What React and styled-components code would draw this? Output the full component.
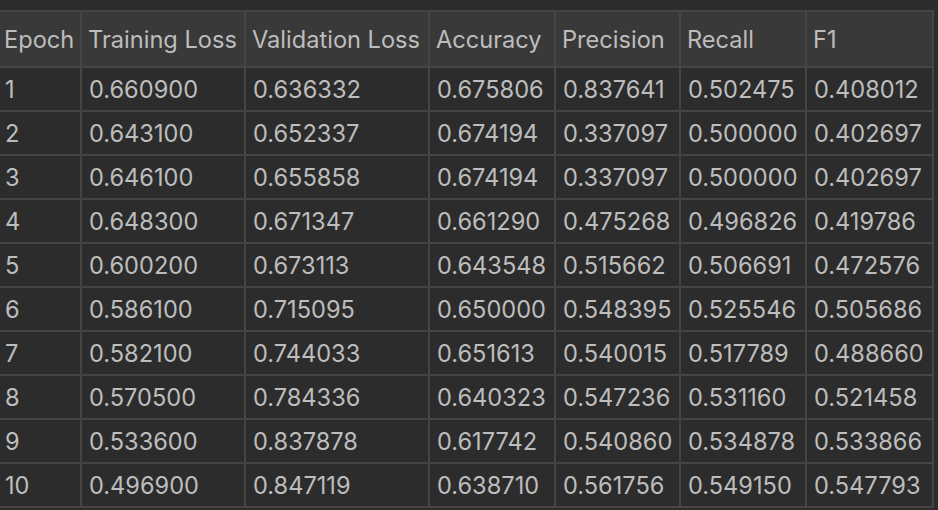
import React from "react";
import styled, { createGlobalStyle } from "styled-components";

const Global = createGlobalStyle`
  html, body { margin: 0; padding: 0; background: #2c2c2c; }
  body { font-family: Inter, "Noto Sans", sans-serif; }
`;

const Page = styled.div`
  padding-top: 10px;
  width: 938px;
  height: 510px;
  box-sizing: border-box;
  overflow: hidden;
`;

const Table = styled.table`
  border-collapse: collapse;
  table-layout: fixed;
  width: 933px;
  color: #bdbdbd;
  font-size: 23.6px;
  border-top: 2px solid #454545;
`;

const HeadCell = styled.th`
  height: 54px;
  padding: 0 0 0 6px;
  text-align: left;
  font-weight: 400;
  background: #393939;
  border: 2px solid #454545;
  white-space: nowrap;
  overflow: hidden;
  &:first-child { border-left: none; padding-left: 4px; }
`;

const Cell = styled.td`
  height: 42px;
  padding: 0 0 0 7px;
  text-align: left;
  background: #2c2c2c;
  border: 2px solid #454545;
  white-space: nowrap;
  overflow: hidden;
  &:first-child { border-left: none; padding-left: 5px; }
`;

const widths = [81, 164, 184, 126, 125, 126, 127];
const headers = ["Epoch", "Training Loss", "Validation Loss", "Accuracy", "Precision", "Recall", "F1"];
const rows = [
  [1, "0.660900", "0.636332", "0.675806", "0.837641", "0.502475", "0.408012"],
  [2, "0.643100", "0.652337", "0.674194", "0.337097", "0.500000", "0.402697"],
  [3, "0.646100", "0.655858", "0.674194", "0.337097", "0.500000", "0.402697"],
  [4, "0.648300", "0.671347", "0.661290", "0.475268", "0.496826", "0.419786"],
  [5, "0.600200", "0.673113", "0.643548", "0.515662", "0.506691", "0.472576"],
  [6, "0.586100", "0.715095", "0.650000", "0.548395", "0.525546", "0.505686"],
  [7, "0.582100", "0.744033", "0.651613", "0.540015", "0.517789", "0.488660"],
  [8, "0.570500", "0.784336", "0.640323", "0.547236", "0.531160", "0.521458"],
  [9, "0.533600", "0.837878", "0.617742", "0.540860", "0.534878", "0.533866"],
  [10, "0.496900", "0.847119", "0.638710", "0.561756", "0.549150", "0.547793"],
];

export default function App() {
  return (
    <Page>
      <Global />
      <Table>
        <colgroup>
          {widths.map((w, i) => (
            <col key={i} style={{ width: w }} />
          ))}
        </colgroup>
        <thead>
          <tr>
            {headers.map((h) => (
              <HeadCell key={h}>{h}</HeadCell>
            ))}
          </tr>
        </thead>
        <tbody>
          {rows.map((r) => (
            <tr key={r[0]}>
              {r.map((v, i) => (
                <Cell key={i}>{v}</Cell>
              ))}
            </tr>
          ))}
        </tbody>
      </Table>
    </Page>
  );
}
